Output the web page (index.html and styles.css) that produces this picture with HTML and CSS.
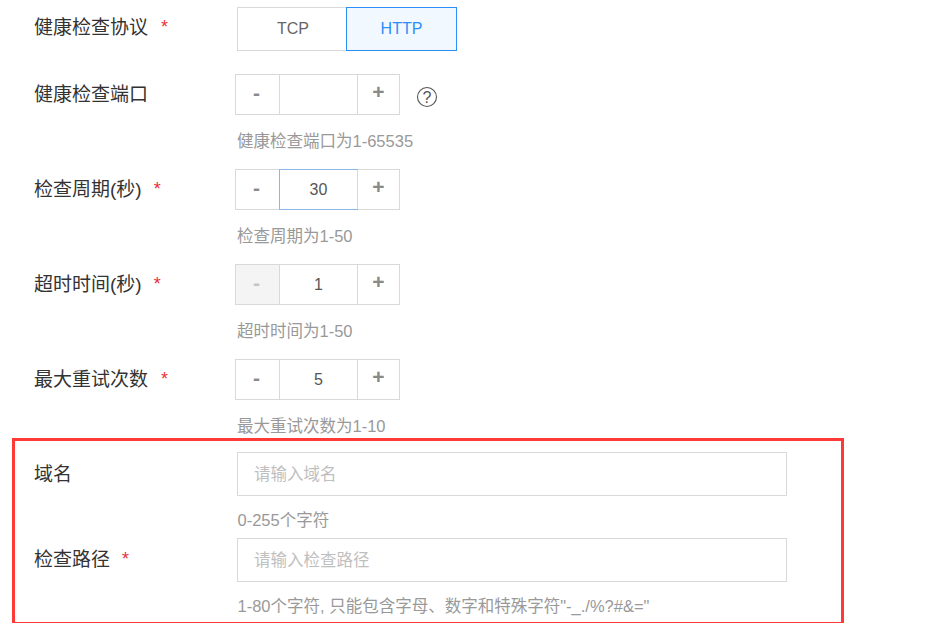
FILE: index.html
```html
<!DOCTYPE html>
<html lang="zh-CN">
<head>
<meta charset="utf-8">
<title>健康检查</title>
<link rel="stylesheet" href="styles.css">
</head>
<body>
<form class="form">
  <div class="row row-protocol">
    <div class="label">健康检查协议<span class="req req-wide">*</span></div>
    <div class="radios">
      <div class="radio">TCP</div>
      <div class="radio radio-on">HTTP</div>
    </div>
  </div>

  <div class="row row-number">
    <div class="label">健康检查端口</div>
    <div class="field-number">
      <div class="number-line">
        <div class="stepper">
          <div class="step step-minus">-</div>
          <div class="step-value"></div>
          <div class="step step-plus">+</div>
        </div>
        <svg class="help-icon" viewBox="0 0 22 22" width="22" height="22" aria-hidden="true">
          <circle cx="11" cy="11" r="9.5" fill="none" stroke="#555" stroke-width="1.1"/>
          <text x="11" y="16.5" text-anchor="middle" class="help-glyph">?</text>
        </svg>
      </div>
      <div class="hint">健康检查端口为1-65535</div>
    </div>
  </div>

  <div class="row row-number">
    <div class="label">检查周期(秒)<span class="req">*</span></div>
    <div class="field-number">
      <div class="stepper">
        <div class="step step-minus">-</div>
        <div class="step-value step-value-focus">30</div>
        <div class="step step-plus">+</div>
      </div>
      <div class="hint">检查周期为1-50</div>
    </div>
  </div>

  <div class="row row-number">
    <div class="label">超时时间(秒)<span class="req">*</span></div>
    <div class="field-number">
      <div class="stepper">
        <div class="step step-minus step-disabled">-</div>
        <div class="step-value">1</div>
        <div class="step step-plus">+</div>
      </div>
      <div class="hint">超时时间为1-50</div>
    </div>
  </div>

  <div class="row row-number row-last-number">
    <div class="label">最大重试次数<span class="req req-wide">*</span></div>
    <div class="field-number">
      <div class="stepper">
        <div class="step step-minus">-</div>
        <div class="step-value">5</div>
        <div class="step step-plus">+</div>
      </div>
      <div class="hint">最大重试次数为1-10</div>
    </div>
  </div>

  <div class="row row-text">
    <div class="label label-text">域名</div>
    <div class="field-text">
      <input class="text-input" type="text" placeholder="请输入域名">
      <div class="hint hint-text">0-255个字符</div>
    </div>
  </div>

  <div class="row row-text">
    <div class="label label-text label-path">检查路径<span class="req">*</span></div>
    <div class="field-text">
      <input class="text-input" type="text" placeholder="请输入检查路径">
      <div class="hint hint-text">1-80个字符, 只能包含字母、数字和特殊字符"-_./%?#&amp;="</div>
    </div>
  </div>
</form>
<div class="highlight"></div>
</body>
</html>
```

FILE: styles.css
```css
html, body {
  margin: 0;
  padding: 0;
  background: #fff;
}

body {
  width: 945px;
  height: 623px;
  overflow: hidden;
  position: relative;
  font-family: "Liberation Sans", "Noto Sans CJK SC", sans-serif;
  color: #333;
}

.form {
  padding: 7px 0 0 34px;
  display: flex;
  flex-direction: column;
}

.row {
  display: flex;
  align-items: flex-start;
}

.label {
  width: 201px;
  flex: none;
  font-size: 19px;
  line-height: 26px;
  color: #333;
}

.req {
  color: #e8303a;
  font-size: 18px;
  margin-left: 12px;
  vertical-align: 1px;
  line-height: 1;
}

.req-wide {
  margin-left: 13px;
}

.row-protocol {
  height: 67px;
}

.row-protocol .label {
  padding-top: 8px;
}

.radios {
  display: flex;
  margin-left: 2px;
}

.radio {
  box-sizing: border-box;
  width: 109px;
  height: 44px;
  padding-left: 2px;
  line-height: 41px;
  text-align: center;
  font-size: 16px;
  color: #666;
  border: 1px solid #d9d9d9;
  border-right: 0;
}

.radio-on {
  width: 111px;
  padding-left: 0;
  color: #2b8ff7;
  background: #f1f8ff;
  border: 1px solid #2b8ff7;
}

.row-number {
  height: 95px;
}

.row-number .label {
  padding-top: 8px;
}

.row-last-number {
  height: 93px;
}

.number-line {
  display: flex;
  align-items: flex-start;
}

.stepper {
  display: flex;
  box-sizing: border-box;
  width: 165px;
  height: 41px;
  border: 1px solid #d9d9d9;
}

.step {
  box-sizing: border-box;
  height: 39px;
  text-align: center;
  font-weight: 700;
  color: #8a8a8a;
  font-size: 21px;
  line-height: 33px;
}

.step-minus {
  width: 44px;
  padding-right: 2px;
  border-right: 1px solid #d9d9d9;
  line-height: 35px;
}

.step-plus {
  flex: 1;
  border-left: 1px solid #d9d9d9;
}

.step-disabled {
  background: #f4f4f4;
  color: #c4c4c4;
}

.step-value {
  box-sizing: border-box;
  width: 77px;
  height: 39px;
  text-align: center;
  font-size: 16px;
  line-height: 40px;
  color: #555;
}

.step-value-focus {
  outline: 1px solid #8bb8e6;
}

.help-icon {
  margin: 12px 0 0 16px;
  flex: none;
}

.help-glyph {
  font-family: "Liberation Sans", sans-serif;
  font-size: 16px;
  fill: #555;
}

.hint {
  font-size: 16.5px;
  line-height: 22px;
  color: #999;
  margin: 15px 0 0 2px;
  white-space: nowrap;
}

.row-text {
  height: 86px;
}

.label-text {
  padding-top: 10px;
}

.label-path {
  padding-top: 9px;
}

.field-text {
  margin-left: 2px;
  display: flex;
  flex-direction: column;
}

.text-input {
  box-sizing: border-box;
  display: block;
  width: 550px;
  height: 44px;
  border: 1px solid #d9d9d9;
  border-radius: 0;
  padding: 0 16px;
  margin: 0;
  outline: none;
  font-family: inherit;
  font-size: 16.5px;
}

.text-input::placeholder {
  color: #bfbfbf;
  opacity: 1;
}

.hint-text {
  margin: 13px 0 0 0.5px;
}

.highlight {
  position: absolute;
  left: 12px;
  top: 438px;
  width: 832px;
  height: 187px;
  box-sizing: border-box;
  border: 3px solid #ff3838;
  pointer-events: none;
}
```
